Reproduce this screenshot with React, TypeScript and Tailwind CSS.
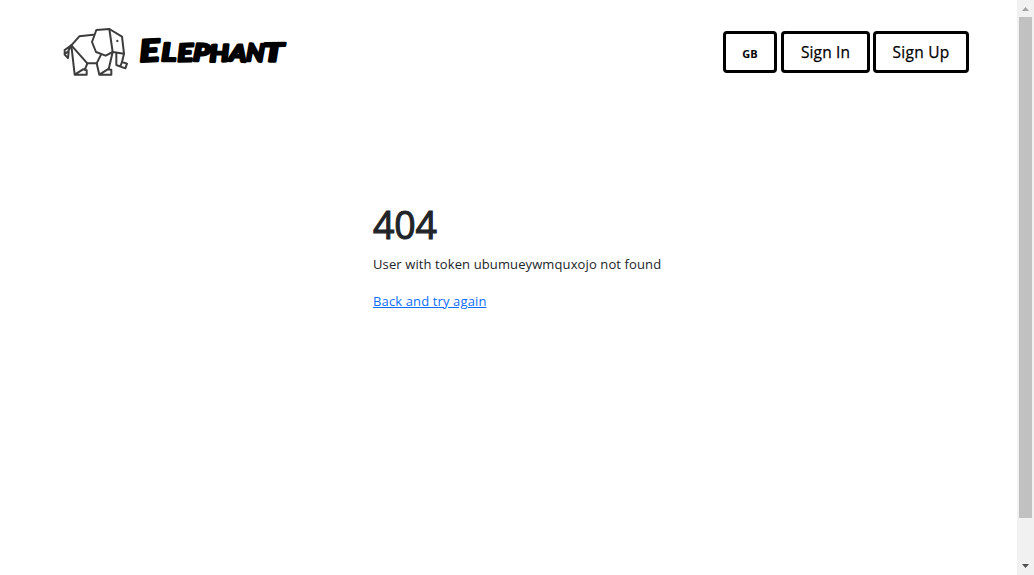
const wordmark = [
  { letter: 'E', x: 139.5, size: 30, width: 20, tilt: -3 },
  { letter: 'L', x: 161.5, size: 24, width: 14.5, tilt: 0 },
  { letter: 'E', x: 177.5, size: 24, width: 15.5, tilt: -2 },
  { letter: 'P', x: 193.5, size: 24, width: 16.5, tilt: 3 },
  { letter: 'H', x: 209.5, size: 23, width: 19.5, tilt: -2 },
  { letter: 'A', x: 229.5, size: 23, width: 17, tilt: 4 },
  { letter: 'N', x: 246.5, size: 24, width: 18, tilt: 3 },
  { letter: 'T', x: 263, size: 25, width: 20.5, tilt: -1 },
];

function ElephantIcon() {
  return (
    <svg className="h-16 w-20 shrink-0" viewBox="0 0 240 192" fill="none" stroke="#3d3d3d" strokeWidth="6" strokeLinejoin="round" strokeLinecap="round">
      <path d="M112 44 70 49 46 76 94 130H122L135 104" />
      <path d="M121 30 160 27 170 96 149 107 120 96 108 66Z" />
      <path d="M160 27 198 50 204 101 170 96" />
      <path d="M46 76 26 90V104L36 114 38 97M26 102 36 95 46 76" />
      <path d="M46 76 56 164H92V151L81 148 56 164M94 130 87 148" />
      <path d="M122 130 130 164H166V149L155 148 130 164M170 96 158 148" />
      <path d="M181 98V135L208 145 213 131 198 126 193 139M204 101 198 126" />
      <circle cx="184" cy="63" r="3.4" fill="#3d3d3d" stroke="none" />
    </svg>
  );
}

function Wordmark() {
  return (
    <svg className="h-12 w-[165px] shrink-0" viewBox="130 28 165 48" role="img" aria-label="Elephant">
      <g fill="#000" stroke="#000" strokeWidth="2.7" strokeLinejoin="round" fontFamily="Lato, sans-serif" fontWeight="700" fontStyle="italic">
        {wordmark.map(({ letter, x, size, width, tilt }, i) => (
          <text key={i} x={x} y="61.3" fontSize={size} textLength={width} lengthAdjust="spacingAndGlyphs" transform={`rotate(${tilt} ${x + width / 2} 53)`}>{letter}</text>
        ))}
      </g>
    </svg>
  );
}

export default function App() {
  return (
    <div className="flex h-[575px] w-[1034px] overflow-hidden bg-white font-['Open_Sans','Noto_Sans',sans-serif] text-[#212529]">
      <div className="flex flex-1 flex-col">
        <header className="flex h-[104px] items-start justify-between pr-12 pl-14">
          <a className="flex items-center pt-5" href="#">
            <ElephantIcon />
            <span className="-ml-1.5"><Wordmark /></span>
          </a>
          <nav className="flex gap-1 pt-[31px] font-medium text-black">
            <button className="h-[42px] w-[54px] rounded-[4px] border-3 border-black pt-1 text-[11px] font-bold">GB</button>
            <button className="h-[42px] w-[89px] rounded-[4px] border-3 border-black pt-0.5 text-[15.5px] tracking-[0.15px] [-webkit-text-stroke:0.25px_black]">Sign In</button>
            <button className="-ml-px h-[42px] w-24 rounded-[4px] border-3 border-black pt-0.5 text-[15.5px] tracking-[0.25px] [-webkit-text-stroke:0.25px_black]">Sign Up</button>
          </nav>
        </header>
        <main className="pt-[97px] pl-[373px]">
          <h1 className="text-[37.5px] leading-[48px] font-medium tracking-[-0.2px] [-webkit-text-stroke:1.1px_#212529]">404</h1>
          <p className="mt-[5px] text-[13px] leading-5 tracking-[0.11px] whitespace-nowrap">User with token ubumueywmquxojo not found</p>
          <a className="mt-[17px] block w-fit text-[13px] leading-5 tracking-[0.13px] text-[#0d6efd] underline" href="#">Back and try again</a>
        </main>
      </div>
      <div className="flex w-[17px] flex-col items-center bg-[#f1f1f1]">
        <svg className="h-[17px] w-[17px]" viewBox="0 0 17 17"><path d="M5 11 8.5 7 12 11Z" fill="#a3a3a3" /></svg>
        <div className="h-[501px] w-[13px] bg-[#c1c1c1]" />
        <svg className="mt-auto h-[17px] w-[17px]" viewBox="0 0 17 17"><path d="M5 6H12L8.5 10Z" fill="#505050" /></svg>
      </div>
    </div>
  );
}
